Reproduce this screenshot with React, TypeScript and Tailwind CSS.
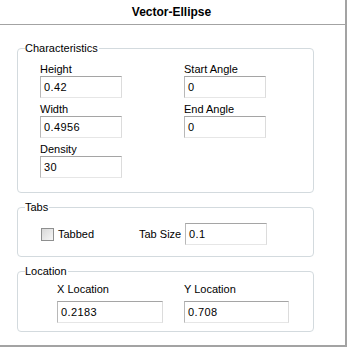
/**
 * Vector-Ellipse properties panel
 */

function Field({ label, value, width = 'w-[82px]' }: { label: string; value: string; width?: string }) {
  return (
    <div className="flex flex-col">
      <span className="h-[14px] leading-[14px]">{label}</span>
      <TextBox value={value} width={width} />
    </div>
  );
}

function TextBox({ value, width }: { value: string; width: string }) {
  return (
    <div
      className={`${width} h-[22px] border border-t-[#a5a5a5] border-l-[#b8b8b8] border-r-[#dcdcdc] border-b-[#e6e6e6] bg-white flex items-center pl-[3px] text-[11px] tracking-[0.4px]`}
    >
      {value}
    </div>
  );
}

function Group({ title, className, children }: { title: string; className: string; children: React.ReactNode }) {
  return (
    <div className={`relative border border-[#d3dade] rounded-[4px] ${className}`}>
      <span className="absolute -top-[8px] left-[7px] bg-white leading-[14px] pr-[1px]">{title}</span>
      {children}
    </div>
  );
}

export default function App() {
  return (
    <div className="w-[348px] h-[348px] bg-white text-[11px] text-black font-['Liberation_Sans',sans-serif]">
      <div className="w-[347px] h-[347px] border-r-2 border-b-2 border-[#a3a3a3] flex flex-col">
        {/* Title */}
        <div className="h-[25px] border-b border-[#a3a3a3] flex items-center justify-center font-bold text-[12px] pr-[2px]">
          Vector-Ellipse
        </div>

        <div className="pl-[17px] pt-[23px] flex flex-col">
          {/* Characteristics */}
          <Group title="Characteristics" className="w-[297px] h-[145px]">
            <div className="grid grid-cols-[144px_82px] gap-y-[4px] pl-[22px] pt-[13px]">
              <Field label="Height" value="0.42" />
              <Field label="Start Angle" value="0" />
              <Field label="Width" value="0.4956" />
              <Field label="End Angle" value="0" />
              <Field label="Density" value="30" />
            </div>
          </Group>

          {/* Tabs */}
          <Group title="Tabs" className="w-[297px] h-[50px] mt-[14px]">
            <div className="flex items-center pl-[23px] pt-[15px]">
              <div className="w-[13px] h-[13px] border border-[#8e8f8f] bg-gradient-to-br from-[#d8d8d8] to-[#f6f6f6]" />
              <span className="ml-[4px] w-[81px]">Tabbed</span>
              <span className="w-[46px]">Tab Size</span>
              <TextBox value="0.1" width="w-[82px]" />
            </div>
          </Group>

          {/* Location */}
          <Group title="Location" className="w-[297px] h-[61px] mt-[14px]">
            <div className="flex pl-[39px] pt-[10px] gap-[21px]">
              <div className="flex flex-col gap-[5px]">
                <span className="h-[14px] leading-[14px]">X Location</span>
                <TextBox value="0.2183" width="w-[106px]" />
              </div>
              <div className="flex flex-col gap-[5px]">
                <span className="h-[14px] leading-[14px]">Y Location</span>
                <TextBox value="0.708" width="w-[105px]" />
              </div>
            </div>
          </Group>
        </div>
      </div>
    </div>
  );
}
